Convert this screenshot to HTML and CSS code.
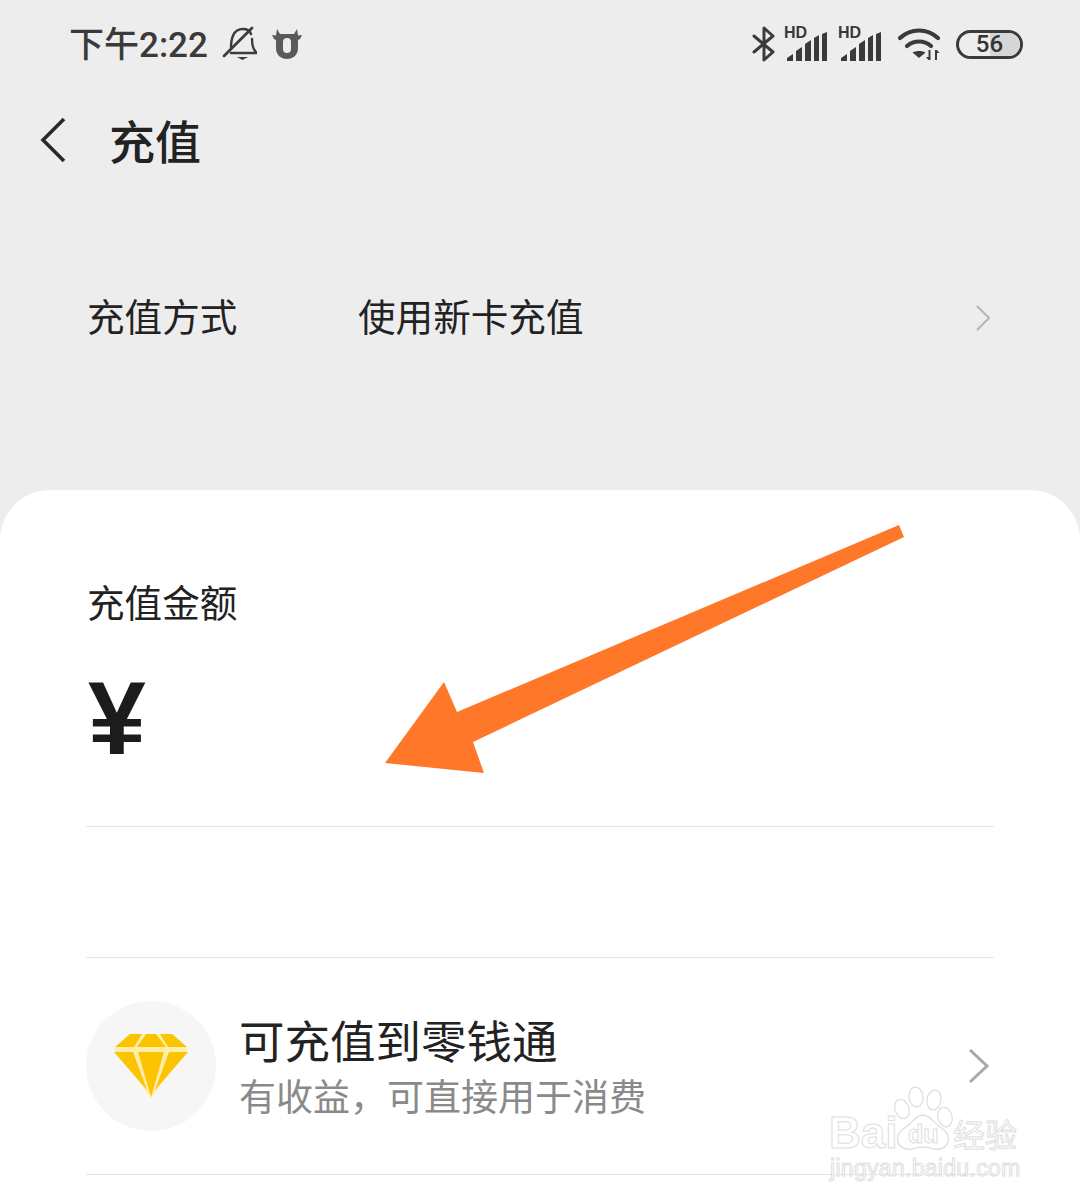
FILE: index.html
```html
<!DOCTYPE html>
<html lang="zh-CN">

<head>
  <meta charset="UTF-8">
  <meta name="viewport" content="width=device-width, initial-scale=1.0">
  <title>充值</title>
  <link rel="stylesheet" href="styles.css">
</head>

<body>
  <div class="page">
    <!-- 状态栏 -->
    <div class="status-bar">
      <div class="status-left">
        <span class="time">下午2:22</span>
        <svg class="ico-bell" width="36" height="36" viewBox="0 0 36 36">
          <path d="M10 22c0-9 2-19 12-19 4 0 7 2 8 5M31 13c0 6 1 11 5 14H10" fill="none" stroke="#3c3c3c" stroke-width="2.400" stroke-linejoin="round" stroke-linecap="round" />
          <path d="M16 31h11l-5.500 3z" fill="#3c3c3c" />
          <path d="M3 30 31 2" stroke="#3c3c3c" stroke-width="2.800" stroke-linecap="round" />
        </svg>
        <svg class="ico-ox" width="30" height="32" viewBox="0 0 30 32">
          <path d="M0 7l4 .5L5 1l3 5h14l3-5 1 6.500 4-.5-2 4-2 1v8c0 7-5 11-11 11S4 27 4 20v-8l-2-1z" fill="#5a5a5a" />
          <rect x="11" y="10" width="8" height="15" rx="4" fill="#ededed" />
        </svg>
      </div>
      <div class="status-right">
        <svg width="24" height="36" viewBox="0 0 24 36">
          <path d="M2 10l19 16-9 8V2l9 8L2 26" fill="none" stroke="#3a3a3a" stroke-width="3" stroke-linejoin="round" stroke-linecap="round" />
        </svg>
        <div class="signal">
          <span class="hd">HD</span>
          <svg width="42" height="30" viewBox="0 0 42 30">
            <path d="M1 29v-3l6-4v7zM10 29V19l6-4v14zM19 29V12l6-4v21zM28 29V6l5-3v26zM36 29V2l5-2v29z" fill="#3a3a3a" />
          </svg>
        </div>
        <div class="signal">
          <span class="hd">HD</span>
          <svg width="42" height="30" viewBox="0 0 42 30">
            <path d="M1 29v-3l6-4v7zM10 29V19l6-4v14zM19 29V12l6-4v21zM28 29V6l5-3v26zM36 29V2l5-2v29z" fill="#3a3a3a" />
          </svg>
        </div>
        <svg class="ico-wifi" width="46" height="34" viewBox="0 0 46 34">
          <path d="M3 11c11-10 27-10 38 0M10 19c7-6 17-6 24 0" fill="none" stroke="#3a3a3a" stroke-width="4.200" stroke-linecap="round" />
          <path d="M15.500 25.500c4-2 9-2 13 0L22 31z" fill="#3a3a3a" />
          <path d="M33.500 23v10h-2l-2.500-3h2.500v-7zM38 33V23h2l2.500 3H40v7z" fill="#3a3a3a" />
        </svg>
        <div class="battery">
          <span class="battery-fill"></span>
          <span class="battery-num">56</span>
        </div>
      </div>
    </div>

    <!-- 标题 -->
    <div class="nav">
      <svg width="28" height="48" viewBox="0 0 28 48">
        <path d="M25 3 4 24l21 21" fill="none" stroke="#2a2a2a" stroke-width="3.600" />
      </svg>
      <h1 class="nav-title">充值</h1>
    </div>

    <!-- 充值方式 -->
    <div class="method">
      <span class="method-label">充值方式</span>
      <span class="method-value">使用新卡充值</span>
      <svg class="method-arrow" width="16" height="28" viewBox="0 0 16 28">
        <path d="M2 2l12 12L2 26" fill="none" stroke="#b8b8b8" stroke-width="2.200" />
      </svg>
    </div>

    <!-- 白色面板 -->
    <div class="sheet">
      <div class="amount">
        <div class="amount-title">充值金额</div>
        <div class="amount-input">¥</div>
      </div>
      <div class="blank-row"></div>
      <div class="lct">
        <div class="lct-icon">
          <svg width="76" height="68" viewBox="0 0 76 68">
            <path d="M17 2h42l16 15-37 49L1 17z" fill="#ffeeaa" />
            <path d="M17 2h12L21 15H2z" fill="#fcc400" />
            <path d="M33 2h10l10 13H24z" fill="#fcc400" />
            <path d="M47 2h12l15 13H55z" fill="#fcc400" />
            <path d="M1 20h19l14 38z" fill="#fcc400" />
            <path d="M25 20h26L38 65z" fill="#fcc400" />
            <path d="M56 20h19L42 58z" fill="#fcc400" />
          </svg>
        </div>
        <div class="lct-text">
          <div class="lct-title">可充值到零钱通</div>
          <div class="lct-sub">有收益，可直接用于消费</div>
        </div>
        <svg width="22" height="36" viewBox="0 0 22 36">
          <path d="M2 2l17 16L2 34" fill="none" stroke="#a8a8a8" stroke-width="3" />
        </svg>
      </div>
    </div>

    <!-- 橙色箭头 -->
    <svg class="arrow" width="1080" height="1203" viewBox="0 0 1080 1203">
      <path d="M385 763 444 682 457 712 899 525 904 537 473 742 484 773z" fill="#ff7729" />
    </svg>

    <!-- 水印 -->
    <div class="mark">
      <svg class="mark-paw" width="60" height="70" viewBox="0 0 60 70">
        <g fill="#fff" stroke="#dedede" stroke-width="1.300">
          <ellipse cx="9" cy="24" rx="7" ry="10" transform="rotate(-20 9 24)" />
          <ellipse cx="23" cy="12" rx="7" ry="10" transform="rotate(-8 23 12)" />
          <ellipse cx="41" cy="15" rx="7" ry="10" transform="rotate(10 41 15)" />
          <ellipse cx="52" cy="32" rx="7" ry="10" transform="rotate(-15 52 32)" />
          <path d="M30 30c7 0 10 7 17 12 8 5 10 10 8 15-2 6-8 8-14 7-4-1-7-2-11-2s-7 1-11 2c-6 1-12-1-14-7-2-5 0-10 8-15 7-5 10-12 17-12z" />
        </g>
      </svg>
      <span class="mark-bai">Bai</span>
      <span class="mark-du">du</span>
      <span class="mark-cn">经验</span>
      <span class="mark-url">jingyan.baidu.com</span>
    </div>
  </div>
</body>

</html>
```

FILE: styles.css
```css
* {
  margin: 0;
  padding: 0;
  box-sizing: border-box;
}

html,
body {
  width: 1080px;
  height: 1203px;
  overflow: hidden;
}

body {
  font-family: "Liberation Sans", "Noto Sans CJK SC", sans-serif;
  color: #222;
}

.page {
  position: relative;
  width: 1080px;
  height: 1203px;
  background-color: #ededed;
  display: flex;
  flex-direction: column;
}

/* 状态栏 */
.status-bar {
  height: 88px;
  padding: 0 57px 0 69px;
  display: flex;
  justify-content: space-between;
  align-items: center;
}

.status-left,
.status-right {
  display: flex;
  align-items: center;
}

.time {
  font-size: 35px;
  margin-bottom: 5px;
  color: #3a3a3a;
  font-family: "Roboto", "Noto Sans CJK SC", sans-serif;
  font-weight: 500;
}

.ico-bell {
  margin-left: 13px;
}

.ico-ox {
  margin-left: 15px;
}

.signal {
  position: relative;
  width: 42px;
  height: 36px;
  margin-left: 12px;
  display: flex;
  align-items: flex-end;
}

.signal:first-of-type {
  margin-left: 10px;
}

.hd {
  position: absolute;
  left: -2px;
  top: -2px;
  font-size: 16px;
  font-weight: 700;
  color: #3a3a3a;
}

.ico-wifi {
  margin-left: 15px;
}

.battery {
  position: relative;
  width: 67px;
  height: 29px;
  margin-left: 13px;
  border: 3px solid #3a3a3a;
  border-radius: 15px;
  overflow: hidden;
  display: flex;
  align-items: center;
  justify-content: center;
}

.battery-fill {
  position: absolute;
  right: 0;
  top: 0;
  bottom: 0;
  width: 30px;
  background-color: #d6d6d6;
}

.battery-num {
  position: relative;
  font-size: 24px;
  font-weight: 500;
  font-family: "Roboto", sans-serif;
  color: #333;
}

/* 标题 */
.nav {
  height: 104px;
  padding-left: 39px;
  display: flex;
  align-items: center;
}

.nav-title {
  margin-left: 42px;
  margin-bottom: 2px;
  font-size: 46px;
  font-weight: 500;
  color: #222;
}

/* 充值方式 */
.method {
  height: 298px;
  padding: 0 88px 46px 87px;
  display: flex;
  align-items: center;
  font-size: 37.600px;
  color: #222;
}

.method-label {
  width: 271px;
  margin-bottom: 7px;
}

.method-value {
  flex: 1;
  margin-bottom: 7px;
}

.method-arrow {
  margin-right: 1px;
}

/* 白色面板 */
.sheet {
  flex: 1;
  background-color: #fff;
  border-radius: 50px 50px 0 0;
  padding: 0 86px;
}

.amount {
  height: 337px;
  border-bottom: 1px solid #e4e4e4;
  padding-top: 89px;
}

.amount-title {
  font-size: 37.600px;
  line-height: 50px;
  padding-left: 1px;
  color: #222;
}

.amount-input {
  margin-top: 34px;
  padding-left: 2px;
  font-size: 104px;
  line-height: 110px;
  font-weight: 700;
  color: #1c1c1c;
}

.blank-row {
  height: 131px;
  border-bottom: 1px solid #e4e4e4;
}

.lct {
  height: 217px;
  border-bottom: 1px solid #e4e4e4;
  display: flex;
  align-items: center;
  padding-right: 4px;
}

.lct-icon {
  width: 130px;
  height: 130px;
  border-radius: 50%;
  background-color: #f6f6f6;
  display: flex;
  align-items: center;
  justify-content: center;
}

.lct-text {
  flex: 1;
  margin-left: 23px;
  padding-top: 10px;
}

.lct-title {
  font-size: 45.500px;
  line-height: 56px;
  color: #222;
}

.lct-sub {
  font-size: 37px;
  line-height: 54px;
  color: #8a8a8a;
}

/* 盖在内容上面的箭头 */
.arrow {
  position: absolute;
  left: 0;
  top: 0;
  pointer-events: none;
}

/* 水印 */
.mark {
  position: absolute;
  left: 0;
  top: 0;
  width: 1080px;
  height: 1203px;
  pointer-events: none;
}

.mark-paw {
  position: absolute;
  left: 893px;
  top: 1085px;
}

.mark-bai,
.mark-du,
.mark-cn,
.mark-url {
  position: absolute;
  color: #fff;
  -webkit-text-stroke: 1px #dedede;
  white-space: nowrap;
}

.mark-bai {
  left: 829px;
  top: 1108px;
  font-size: 44px;
  font-weight: 700;
}

.mark-du {
  left: 908px;
  top: 1120px;
  font-size: 25px;
  font-weight: 700;
}

.mark-cn {
  left: 953px;
  top: 1110px;
  font-size: 32px;
}

.mark-url {
  left: 830px;
  top: 1155px;
  font-size: 23px;
  letter-spacing: 0.300px;
}
```
